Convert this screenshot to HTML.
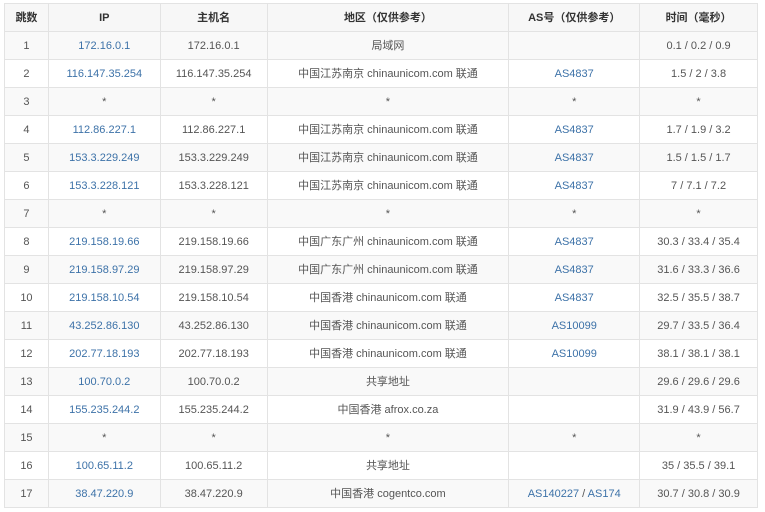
<!DOCTYPE html>
<html><head><meta charset="utf-8"><style>
body{margin:0;background:#fff;width:765px;height:512px;overflow:hidden;font-family:"Liberation Sans","Noto Sans CJK SC",sans-serif;}
table{position:absolute;left:4px;top:3px;border-collapse:collapse;width:754px;font-size:11px;color:#555;}
td,th{border:1px solid #e3e3e3;text-align:center;height:27px;padding:0;white-space:nowrap;line-height:12px;vertical-align:middle;}
th{font-weight:bold;color:#333;background:#f7f7f7;}
tr:nth-child(even) td{background:#f9f9f9;}
a{color:#3d72a8;text-decoration:none;}
</style></head><body>
<table>
<colgroup><col style="width:44px"><col style="width:112px"><col style="width:107px"><col style="width:242px"><col style="width:131px"><col style="width:118px"></colgroup>
<tr><th>跳数</th><th>IP</th><th>主机名</th><th>地区（仅供参考）</th><th>AS号（仅供参考）</th><th>时间（毫秒）</th></tr>
<tr><td>1</td><td><a>172.16.0.1</a></td><td>172.16.0.1</td><td>局域网</td><td></td><td>0.1 / 0.2 / 0.9</td></tr>
<tr><td>2</td><td><a>116.147.35.254</a></td><td>116.147.35.254</td><td>中国江苏南京 chinaunicom.com 联通</td><td><a>AS4837</a></td><td>1.5 / 2 / 3.8</td></tr>
<tr><td>3</td><td>*</td><td>*</td><td>*</td><td>*</td><td>*</td></tr>
<tr><td>4</td><td><a>112.86.227.1</a></td><td>112.86.227.1</td><td>中国江苏南京 chinaunicom.com 联通</td><td><a>AS4837</a></td><td>1.7 / 1.9 / 3.2</td></tr>
<tr><td>5</td><td><a>153.3.229.249</a></td><td>153.3.229.249</td><td>中国江苏南京 chinaunicom.com 联通</td><td><a>AS4837</a></td><td>1.5 / 1.5 / 1.7</td></tr>
<tr><td>6</td><td><a>153.3.228.121</a></td><td>153.3.228.121</td><td>中国江苏南京 chinaunicom.com 联通</td><td><a>AS4837</a></td><td>7 / 7.1 / 7.2</td></tr>
<tr><td>7</td><td>*</td><td>*</td><td>*</td><td>*</td><td>*</td></tr>
<tr><td>8</td><td><a>219.158.19.66</a></td><td>219.158.19.66</td><td>中国广东广州 chinaunicom.com 联通</td><td><a>AS4837</a></td><td>30.3 / 33.4 / 35.4</td></tr>
<tr><td>9</td><td><a>219.158.97.29</a></td><td>219.158.97.29</td><td>中国广东广州 chinaunicom.com 联通</td><td><a>AS4837</a></td><td>31.6 / 33.3 / 36.6</td></tr>
<tr><td>10</td><td><a>219.158.10.54</a></td><td>219.158.10.54</td><td>中国香港 chinaunicom.com 联通</td><td><a>AS4837</a></td><td>32.5 / 35.5 / 38.7</td></tr>
<tr><td>11</td><td><a>43.252.86.130</a></td><td>43.252.86.130</td><td>中国香港 chinaunicom.com 联通</td><td><a>AS10099</a></td><td>29.7 / 33.5 / 36.4</td></tr>
<tr><td>12</td><td><a>202.77.18.193</a></td><td>202.77.18.193</td><td>中国香港 chinaunicom.com 联通</td><td><a>AS10099</a></td><td>38.1 / 38.1 / 38.1</td></tr>
<tr><td>13</td><td><a>100.70.0.2</a></td><td>100.70.0.2</td><td>共享地址</td><td></td><td>29.6 / 29.6 / 29.6</td></tr>
<tr><td>14</td><td><a>155.235.244.2</a></td><td>155.235.244.2</td><td>中国香港 afrox.co.za</td><td></td><td>31.9 / 43.9 / 56.7</td></tr>
<tr><td>15</td><td>*</td><td>*</td><td>*</td><td>*</td><td>*</td></tr>
<tr><td>16</td><td><a>100.65.11.2</a></td><td>100.65.11.2</td><td>共享地址</td><td></td><td>35 / 35.5 / 39.1</td></tr>
<tr><td>17</td><td><a>38.47.220.9</a></td><td>38.47.220.9</td><td>中国香港 cogentco.com</td><td><a>AS140227</a> / <a>AS174</a></td><td>30.7 / 30.8 / 30.9</td></tr>
</table>
</body></html>
